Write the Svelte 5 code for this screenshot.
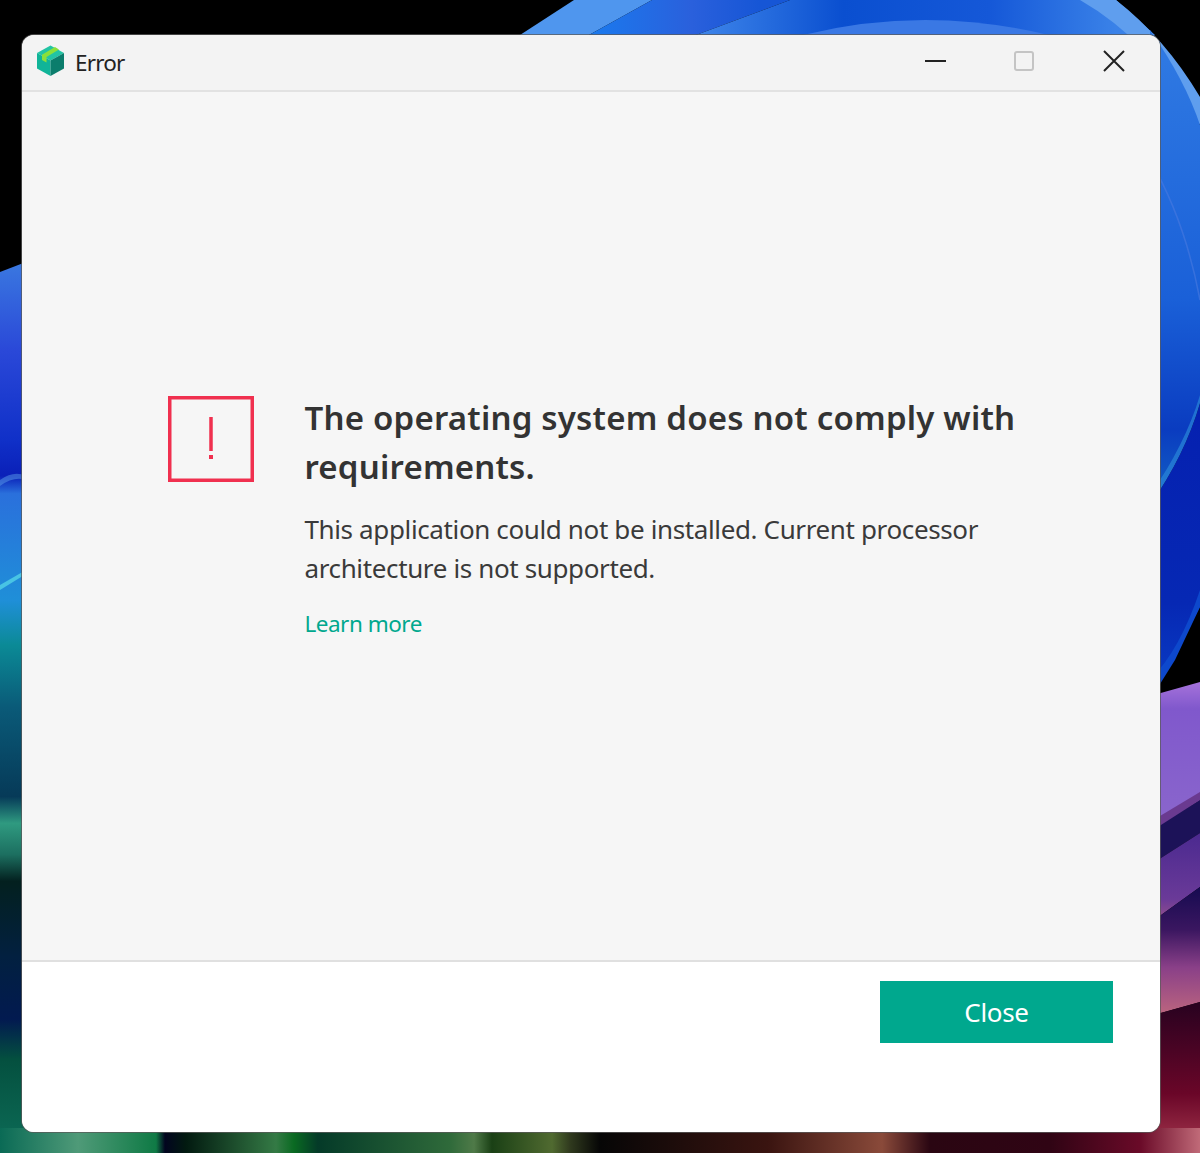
<script>
  let title = 'The operating system does not comply with requirements.';
  let message = 'This application could not be installed. Current processor architecture is not supported.';
</script>

<style>
  :global(body) {
    margin: 0;
    background: #000;
  }

  .desktop {
    position: relative;
    width: 1200px;
    height: 1153px;
    overflow: hidden;
    box-sizing: border-box;
    padding: 35px 40px 21px 22px;
    font-family: "Noto Sans", "Open Sans", sans-serif;
  }

  .wallpaper {
    position: absolute;
    inset: 0;
    filter: blur(0.6px);
  }

  .window {
    position: relative;
    height: 100%;
    display: flex;
    flex-direction: column;
    border-radius: 12px;
    overflow: hidden;
    background: #f6f6f6;
    box-shadow: 0 0 0 1px rgba(90, 90, 90, 0.75);
  }

  .titlebar {
    height: 55px;
    flex: none;
    display: flex;
    align-items: center;
    background: #f3f3f3;
    border-bottom: 2px solid #e2e2e2;
    color: #222;
  }

  .app-icon {
    margin-left: 14px;
    margin-top: -3px;
  }

  .caption {
    margin-left: 10px;
    font-size: 22.500px;
    letter-spacing: -0.8px;
    flex: 1;
  }

  .controls {
    display: flex;
    align-items: center;
    margin-top: -3px;
    margin-right: 35px;
    gap: 68px;
  }

  .controls svg {
    display: block;
  }

  .close-icon {
    margin-left: 1px;
  }

  .content {
    flex: 1;
    display: flex;
    align-items: flex-start;
    padding: 304px 120px 0 146px;
  }

  .alert-icon {
    flex: none;
    margin-right: 50.500px;
  }

  .text {
    flex: 1;
    margin-top: -3px;
    color: #333;
  }

  h1 {
    margin: 0;
    font-size: 33px;
    line-height: 49px;
    font-weight: 600;
    letter-spacing: 0.2px;
  }

  p {
    margin: 19px 0 0;
    font-size: 26px;
    line-height: 39px;
    letter-spacing: -0.37px;
    color: #3a3a3a;
  }

  .more {
    display: block;
    margin-top: 20px;
    font-size: 22.500px;
    line-height: 32px;
    letter-spacing: -0.5px;
    color: #00a88e;
    text-decoration: none;
  }

  .footer {
    height: 172px;
    flex: none;
    box-sizing: border-box;
    background: #fff;
    border-top: 2px solid #e0e0e0;
    display: flex;
    justify-content: flex-end;
    align-items: flex-start;
    padding: 19px 47px 0 0;
  }

  .close {
    width: 233px;
    height: 62px;
    border: 0;
    padding: 0;
    background: #00a88e;
    color: #fff;
    font-family: inherit;
    font-size: 26px;
    letter-spacing: -0.3px;
  }
</style>

<div class="desktop">
  <svg class="wallpaper" width="1200" height="1153" viewBox="0 0 1200 1153">
    <defs>
      <linearGradient id="topDeep" x1="696" y1="0" x2="1116" y2="0" gradientUnits="userSpaceOnUse">
        <stop offset="0" stop-color="#3f86ea" />
        <stop offset="0.35" stop-color="#0a4fd0" />
        <stop offset="0.7" stop-color="#1558d8" />
        <stop offset="1" stop-color="#3a82e8" />
      </linearGradient>
      <linearGradient id="topMid" x1="589" y1="0" x2="760" y2="0" gradientUnits="userSpaceOnUse">
        <stop offset="0" stop-color="#1a7aee" />
        <stop offset="0.6" stop-color="#2a60dc" />
        <stop offset="1" stop-color="#1656d6" />
      </linearGradient>
      <linearGradient id="rightBlue" x1="0" y1="60" x2="0" y2="495" gradientUnits="userSpaceOnUse">
        <stop offset="0" stop-color="#2e78e2" />
        <stop offset="0.55" stop-color="#1a60d8" />
        <stop offset="0.85" stop-color="#0a3cc0" />
        <stop offset="1" stop-color="#1260c4" />
      </linearGradient>
      <linearGradient id="rightDeep" x1="0" y1="400" x2="0" y2="690" gradientUnits="userSpaceOnUse">
        <stop offset="0" stop-color="#0520b0" />
        <stop offset="0.7" stop-color="#0628b4" />
        <stop offset="1" stop-color="#0a3cc4" />
      </linearGradient>
      <linearGradient id="leftStrip" x1="0" y1="262" x2="0" y2="1153" gradientUnits="userSpaceOnUse">
        <stop offset="0" stop-color="#3a78e0" />
        <stop offset="0.1" stop-color="#2a48d8" />
        <stop offset="0.2" stop-color="#1030c8" />
        <stop offset="0.24" stop-color="#0a20b8" />
        <stop offset="0.26" stop-color="#2a70dc" />
        <stop offset="0.38" stop-color="#1f8fd8" />
        <stop offset="0.43" stop-color="#0b8a96" />
        <stop offset="0.5" stop-color="#0a5a78" />
        <stop offset="0.6" stop-color="#063a58" />
        <stop offset="0.63" stop-color="#2f9a80" />
        <stop offset="0.665" stop-color="#1c6f60" />
        <stop offset="0.695" stop-color="#03201f" />
        <stop offset="0.78" stop-color="#022040" />
        <stop offset="0.85" stop-color="#021a50" />
        <stop offset="0.895" stop-color="#04503f" />
        <stop offset="1" stop-color="#0d6d58" />
      </linearGradient>
      <linearGradient id="purple" x1="0" y1="680" x2="0" y2="825" gradientUnits="userSpaceOnUse">
        <stop offset="0" stop-color="#a874dc" />
        <stop offset="0.2" stop-color="#8058cc" />
        <stop offset="1" stop-color="#8a66cc" />
      </linearGradient>
      <linearGradient id="purple2" x1="0" y1="835" x2="0" y2="915" gradientUnits="userSpaceOnUse">
        <stop offset="0" stop-color="#4c2a90" />
        <stop offset="0.8" stop-color="#6a3a98" />
        <stop offset="1" stop-color="#8a4a90" />
      </linearGradient>
      <linearGradient id="plum" x1="0" y1="885" x2="0" y2="1012" gradientUnits="userSpaceOnUse">
        <stop offset="0" stop-color="#140a50" />
        <stop offset="0.35" stop-color="#3a1660" />
        <stop offset="0.65" stop-color="#8a4088" />
        <stop offset="1" stop-color="#b9637f" />
      </linearGradient>
      <linearGradient id="wine" x1="0" y1="1005" x2="0" y2="1153" gradientUnits="userSpaceOnUse">
        <stop offset="0" stop-color="#2a0220" />
        <stop offset="0.6" stop-color="#6a0628" />
        <stop offset="1" stop-color="#a83a50" />
      </linearGradient>
      <linearGradient id="bottomLeft" x1="0" y1="0" x2="600" y2="0" gradientUnits="userSpaceOnUse">
        <stop offset="0" stop-color="#0a6a55" />
        <stop offset="0.13" stop-color="#4f9a78" />
        <stop offset="0.26" stop-color="#0f7a45" />
        <stop offset="0.275" stop-color="#02051f" />
        <stop offset="0.31" stop-color="#021a10" />
        <stop offset="0.46" stop-color="#347a45" />
        <stop offset="0.49" stop-color="#0a6a22" />
        <stop offset="0.53" stop-color="#043a28" />
        <stop offset="0.75" stop-color="#2f6a3a" />
        <stop offset="0.79" stop-color="#4f7a48" />
        <stop offset="0.82" stop-color="#1a4015" />
        <stop offset="0.92" stop-color="#506a30" />
        <stop offset="0.95" stop-color="#303a1e" />
        <stop offset="1" stop-color="#060606" />
      </linearGradient>
      <linearGradient id="bottomRight" x1="600" y1="0" x2="1200" y2="0" gradientUnits="userSpaceOnUse">
        <stop offset="0" stop-color="#060606" />
        <stop offset="0.28" stop-color="#3a1410" />
        <stop offset="0.47" stop-color="#8a4a3a" />
        <stop offset="0.55" stop-color="#2a0612" />
        <stop offset="0.75" stop-color="#300414" />
        <stop offset="0.9" stop-color="#6a0a28" />
        <stop offset="1" stop-color="#c06a78" />
      </linearGradient>
    </defs>

    <rect width="1200" height="1153" fill="#000" />

    <!-- blue sweep along the top -->
    <path d="M520 35 L574 0 L652 0 L589 35 Z" fill="#4f96ee" />
    <path d="M589 35 L652 0 L790 0 L696 35 Z" fill="url(#topMid)" />
    <path d="M696 35 L790 0 L1116 0 L1155 35 Z" fill="url(#topDeep)" />
    <path d="M803 35 Q924 5 1049 35 Z" fill="#3a78e4" />
    <path d="M1080 0 L1116 0 Q1165 38 1200 97 L1200 125 Q1150 40 1080 0 Z" fill="#5f9eee" />

    <!-- blue sweep down the right edge -->
    <path d="M1150 30 Q1185 80 1200 125 L1200 403 Q1185 455 1150 505 Z" fill="url(#rightBlue)" />
    <path d="M1150 505 Q1185 455 1200 403 L1200 607 L1150 700 Z" fill="url(#rightDeep)" />
    <path d="M1150 160 Q1185 220 1200 300" fill="none" stroke="#4a7ae0" stroke-width="1.500" opacity="0.6" />
    <path d="M1150 505 Q1185 455 1200 403 L1200 395 Q1185 445 1150 495 Z" fill="#2a86d8" opacity="0.7" />
    <path d="M1150 700 L1175 660 L1200 607 L1200 590 Q1180 650 1150 680 Z" fill="#0d48cc" />

    <!-- purple and wine layers lower right -->
    <path d="M1150 696 L1200 682 L1200 800 L1150 830 Z" fill="url(#purple)" />
    <path d="M1150 830 L1200 800 L1200 833 L1150 865 Z" fill="#1c1258" />
    <path d="M1150 822 L1200 792 L1200 800 L1150 832 Z" fill="#6a3a90" />
    <path d="M1150 865 L1200 833 L1200 887 L1150 923 Z" fill="url(#purple2)" />
    <path d="M1150 923 L1200 887 L1200 1002 L1150 1016 Z" fill="url(#plum)" />
    <path d="M1150 1016 L1200 1002 L1200 1153 L1150 1153 Z" fill="url(#wine)" />

    <!-- left edge and bottom edge -->
    <path d="M0 272 L26 262 V1153 H0 Z" fill="url(#leftStrip)" />
    <path d="M0 585 L26 570 V574 L0 590 Z" fill="#48c4e4" />
    <path d="M0 480 Q14 470 26 476 V480 Q14 476 0 486 Z" fill="#5a9ce8" opacity="0.5" />
    <rect x="0" y="1128" width="600" height="25" fill="url(#bottomLeft)" />
    <rect x="600" y="1128" width="600" height="25" fill="url(#bottomRight)" />
  </svg>

  <div class="window">
    <div class="titlebar">
      <svg class="app-icon" width="29" height="32" viewBox="0 0 29 32">
        <path d="M14.500 0.500 L28 8 L14.500 15.500 L1 8 Z" fill="#22c4a4" />
        <path d="M1 8 L14.500 15.500 V31 L1 23.500 Z" fill="#10b498" />
        <path d="M28 8 L14.500 15.500 V31 L28 23.500 Z" fill="#0b7d6c" />
        <path d="M19 2 L23 4.500 L10.500 12 V17.500 L6 15 V9.800 Z" fill="#8ae03a" />
      </svg>
      <span class="caption">Error</span>
      <div class="controls">
        <svg width="21" height="4" viewBox="0 0 21 4">
          <rect x="0" y="1" width="21" height="2" fill="#222" />
        </svg>
        <svg width="20" height="20" viewBox="0 0 20 20">
          <rect x="1" y="1" width="18" height="18" rx="2" fill="none" stroke="#c4c4c4" stroke-width="2" />
        </svg>
        <svg class="close-icon" width="22" height="22" viewBox="0 0 22 22">
          <path d="M1 1 L21 21 M21 1 L1 21" stroke="#222" stroke-width="2" fill="none" />
        </svg>
      </div>
    </div>

    <div class="content">
      <svg class="alert-icon" width="86" height="86" viewBox="0 0 86 86">
        <rect x="1.750" y="1.750" width="82.500" height="82.500" fill="none" stroke="#f0304f" stroke-width="3.500" />
        <rect x="41.250" y="21" width="3.500" height="34" fill="#f0304f" />
        <rect x="41" y="59" width="4" height="4" fill="#f0304f" />
      </svg>
      <div class="text">
        <h1>{title}</h1>
        <p>{message}</p>
        <a class="more" href="#more">Learn more</a>
      </div>
    </div>

    <div class="footer">
      <button class="close">Close</button>
    </div>
  </div>
</div>
